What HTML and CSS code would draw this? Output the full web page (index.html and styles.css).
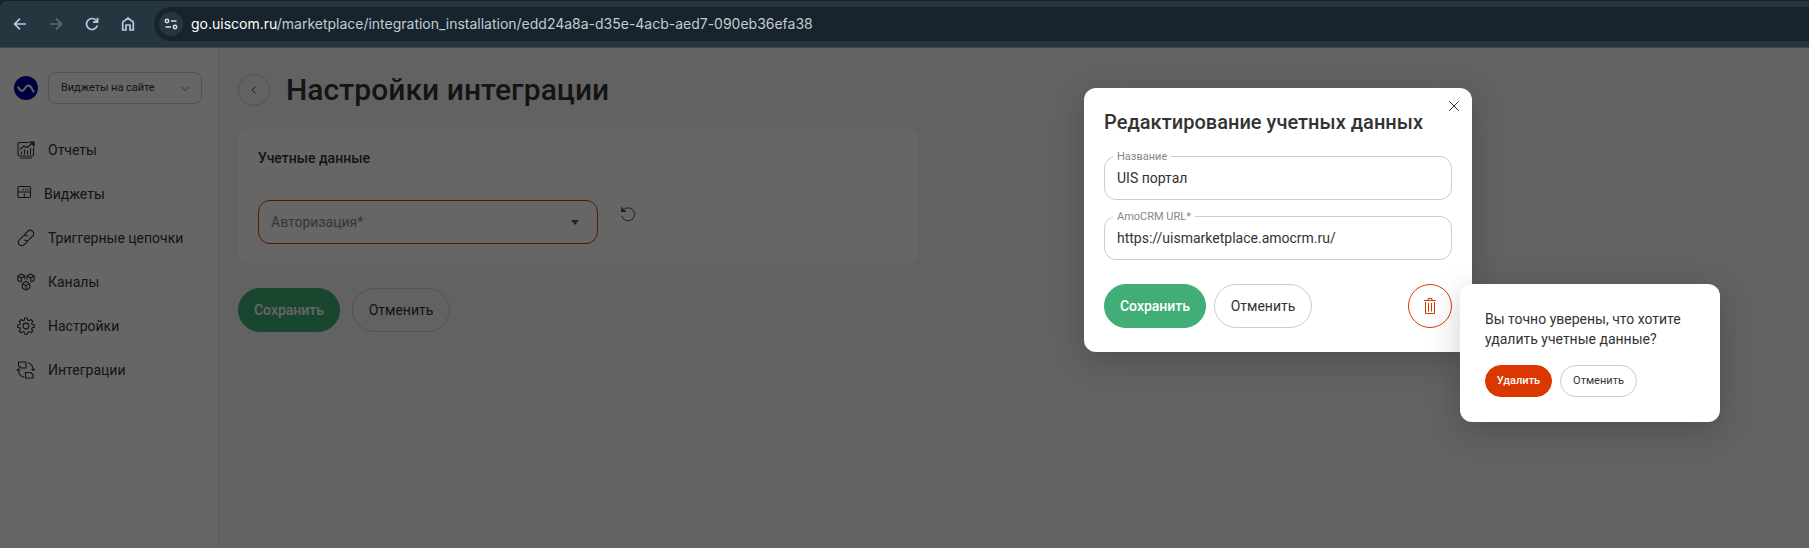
FILE: index.html
```
<!DOCTYPE html>
<html lang="ru">
<head>
<meta charset="utf-8">
<title>Настройки интеграции</title>
<link rel="stylesheet" href="styles.css">
</head>
<body>
<div class="chrome">
<div class="browser">
  <svg class="nav-icon" viewBox="0 0 16 16"><path d="M14 8H3M8 2.600 2.600 8 8 13.400"/></svg>
  <svg class="nav-icon dim" viewBox="0 0 16 16"><path d="M2 8h11M8 2.600 13.400 8 8 13.400"/></svg>
  <svg class="nav-icon" viewBox="0 0 16 16"><path d="M13.300 9.500A5.500 5.500 0 1 1 12 4.200L13.500 5.700M13.600 1.800V6.200H9"/></svg>
  <svg class="nav-icon" viewBox="0 0 16 16"><path d="M2.700 6.200 8 2l5.300 4.200V14H10V9H6v5H2.700z"/></svg>
  <div class="address">
    <span class="site-info"><svg viewBox="0 0 14 14"><circle cx="3" cy="4" r="1.700"/><path d="M7 4h5.500M1.500 10H7"/><circle cx="11" cy="10" r="1.700"/></svg></span>
    <span class="url"><b>go.uiscom.ru</b>/marketplace/integration_installation/edd24a8a-d35e-4acb-aed7-090eb36efa38</span>
  </div>
</div>
</div>
<div class="app">
  <aside class="sidebar">
    <div class="product">
      <svg class="logo" viewBox="0 0 24 24"><circle cx="12" cy="12" r="12" fill="#0000a0"/><path d="M3.200 11.500h1c1.200 0 1 3.500 3.800 3.500 3 0 3-5.500 6.300-5.500 3.700 0 3.200 5 6 6.500" fill="none" stroke="#fff" stroke-width="2"/></svg>
      <div class="select"><span>Виджеты на сайте</span><svg viewBox="0 0 10 6"><path d="m1.500 1 3.500 3.500L8.500 1"/></svg></div>
    </div>
    <nav class="menu">
      <a class="item"><svg viewBox="0 0 18 18"><path d="M11.500 1.500h-9a1.500 1.500 0 0 0-1.500 1.500v10.500A1.500 1.500 0 0 0 2.500 15h12.500a1.500 1.500 0 0 0 1.500-1.500V6.500M3 17h12M3 8.500l4-3.500 3 1.500 5.500-4.500M4.500 13.500v-3M7.500 13.500V8.500M10.500 13.500v-4M13.500 13.500V7"/><path d="M13 1h4v4z" fill="#333"/></svg>Отчеты</a>
      <a class="item widgets"><svg viewBox="0 0 18 18"><rect x=".9" y="1.500" width="12.600" height="11" rx="1.200"/><path d="M1 7h12.500M7.300 8.500v4"/><path d="M5.600 4.500h1.200M8 4.500h1.200M10.400 4.500h1.200" stroke-width="1.500"/></svg>Виджеты</a>
      <a class="item"><svg viewBox="0 0 18 18"><path d="M7.300 5.700 10.700 2.300a3.300 3.300 0 0 1 4.900 4.900l-3.500 3.500a3.300 3.300 0 0 1-4.900 0M10.700 12.300l-3.400 3.400a3.300 3.300 0 0 1-4.900-4.900l3.500-3.500a3.300 3.300 0 0 1 4.900 0"/></svg>Триггерные цепочки</a>
      <a class="item"><svg viewBox="0 0 18 18"><path d="M3.500 9 .8 7.200V3L4.300 1l3.600 2v3.500M.8 3l3.500 2 3.600-2M4.300 5v4M14.500 9l2.700-1.800V3l-3.500-2-3.600 2v3.500M10.100 3l3.600 2 3.500-2M13.700 5v4M5.300 10.500 9 8.500l3.700 2v4.500L9 17.200l-3.700-2.200zM5.300 10.500 9 12.700l3.700-2.200M9 12.700v4.300"/></svg>Каналы</a>
      <a class="item"><svg viewBox="0 0 18 18"><circle cx="9" cy="9" r="2.900"/><path d="M7.700 1h2.600l.5 2.100 1.300.6 1.900-1.200 1.800 1.800-1.200 1.900.6 1.400 2.100.4v2.300l-2.100.5-.6 1.300 1.200 1.900-1.800 1.800-1.900-1.200-1.300.6-.5 2.100H7.700l-.5-2.100-1.300-.6L4 15.800 2.200 14l1.200-1.900-.6-1.300-2.100-.5V8l2.100-.4.6-1.400-1.200-1.900L4 2.500l1.900 1.200 1.300-.6z"/></svg>Настройки</a>
      <a class="item"><svg viewBox="0 0 18 18"><path d="M1.500 1h7.500v6H4L1.500 5zM8.500 11.500h5l2.500 2v3.500H8.500zM11 1.800c3 .7 5 3.500 5 7.200M7 16.200C3.800 15.500 1.500 13 1.500 9.500"/><path d="M14.500 8.200h3.500L16.200 10zM-.5 9.300h3.800L1.500 7.500z" fill="#333" stroke-width=".5"/></svg>Интеграции</a>
    </nav>
  </aside>
  <main class="content">
    <header class="heading">
      <span class="back"><svg viewBox="0 0 8 10"><path d="M5.500 1.500 2 5l3.500 3.500"/></svg></span>
      <h1>Настройки интеграции</h1>
    </header>
    <section class="card">
      <h2>Учетные данные</h2>
      <div class="auth-row">
        <div class="auth-select"><span>Авторизация*</span><i class="caret"></i></div>
        <svg class="reset" viewBox="0 0 16 16"><path d="M3.200 4A6.500 6.500 0 1 1 1.800 10" stroke="#555"/><path d="M1 .5V6h5.500z" fill="#555"/></svg>
      </div>
    </section>
    <div class="actions"><span class="btn primary">Сохранить</span><span class="btn">Отменить</span></div>
  </main>
  <div class="backdrop"></div>
</div>
<div class="dialog">
  <svg class="close" viewBox="0 0 12 12"><path d="m1.300 1.300 9.400 9.400M10.700 1.300l-9.400 9.400"/></svg>
  <h3>Редактирование учетных данных</h3>
  <fieldset class="field"><legend>Название</legend><div>UIS портал</div></fieldset>
  <fieldset class="field"><legend>AmoCRM URL*</legend><div>https://uismarketplace.amocrm.ru/</div></fieldset>
  <div class="dialog-actions">
    <span class="btn primary">Сохранить</span><span class="btn">Отменить</span>
    <span class="delete"><svg viewBox="0 0 14 18"><path d="M1 3.500h12M5 3.500v-2h4v2M2.500 5v11.500h9V5M5.500 6v8.500M8.500 6v8.500"/></svg></span>
  </div>
</div>
<div class="confirm">
  <p>Вы точно уверены, что хотите<br>удалить учетные данные?</p>
  <div class="confirm-actions"><span class="btn small danger">Удалить</span><span class="btn small">Отменить</span></div>
</div>
</body>
</html>
```
FILE: styles.css
```
* { box-sizing: border-box; }
body { margin: 0; height: 548px; overflow: hidden; display: flex; flex-direction: column; font-family: Roboto, "Liberation Sans", sans-serif; font-size: 14px; color: #333; }
h1, h2, h3, p { margin: 0; }
svg { fill: none; stroke-linecap: butt; flex: none; }

.chrome { flex: none; height: 48px; padding-top: 1px; background: #14212a; }
.browser { height: 47px; display: flex; align-items: center; gap: 20px; padding-left: 12px; background: #263640; border-bottom: 1px solid #3f4651; border-top-left-radius: 6px; }
.nav-icon { width: 16px; height: 16px; stroke: #b5ccdb; stroke-width: 1.7; }
.nav-icon.dim { stroke: #5c6d78; }
.address { flex: 1; height: 34px; margin-left: -2px; padding-left: 5px; display: flex; align-items: center; gap: 8px; border-radius: 17px 0 0 17px; background: #17242d; }
.site-info { width: 24px; height: 24px; border-radius: 50%; background: #263640; display: flex; align-items: center; justify-content: center; }
.site-info svg { width: 14px; height: 14px; stroke: #d5dde2; stroke-width: 1.5; }
.url { font-family: Inter, sans-serif; font-size: 14px; color: #c3cbd0; white-space: nowrap; letter-spacing: -.008px; padding-bottom: 2px; }
.url b { font-weight: 400; color: #fff; }

.app { flex: 1; display: flex; position: relative; background: #f6f6f6; }
.backdrop { position: absolute; inset: 0; background: rgba(0, 0, 0, .6); }
.sidebar { width: 219px; background: #fff; border-right: 1px solid #e6e6e6; padding-top: 24px; }
.product { display: flex; align-items: center; gap: 10px; padding-left: 14px; }
.logo { width: 24px; height: 24px; }
.select { width: 154px; height: 32px; border: 1px solid #ccc; border-radius: 8px; display: flex; align-items: center; justify-content: space-between; padding: 0 11px 0 12px; font-size: 11px; }
.select span { padding-bottom: 1px; letter-spacing: -.05px; }
.select svg { width: 10px; height: 6px; stroke: #777; margin-top: 2px; }
.menu { display: flex; flex-direction: column; padding: 24px 0 0 17px; }
.item { height: 44px; display: flex; align-items: center; gap: 13px; }
.item svg { width: 18px; height: 18px; stroke: #333; stroke-width: 1.1; overflow: visible; }
.item.widgets { gap: 9px; }

.content { flex: 1; padding: 24px 0 0 19px; }
.heading { display: flex; align-items: center; gap: 16px; height: 36px; }
.back { width: 32px; height: 32px; border: 1px solid #ccc; border-radius: 50%; display: flex; align-items: center; justify-content: center; }
.back svg { width: 8px; height: 10px; stroke: #444; margin-right: 1px; }
h1 { font-size: 30px; font-weight: 500; line-height: 36px; letter-spacing: .05px; }
.card { width: 680px; height: 136px; margin-top: 20px; border-radius: 12px; background: #fff; padding: 20px; }
h2 { font-size: 14px; font-weight: 500; line-height: 20px; }
.auth-row { display: flex; gap: 22px; margin-top: 32px; }
.auth-select { width: 340px; height: 44px; border: 1px solid #db3700; border-radius: 12px; display: flex; align-items: center; justify-content: space-between; padding: 0 18px 0 12px; color: #888; }
.caret { border: 4px solid transparent; border-top: 5px solid #555; border-bottom: 0; }
.reset { width: 16px; height: 16px; margin-top: 6px; }
.actions { display: flex; gap: 12px; margin-top: 24px; }
.btn { height: 44px; padding: 0 16px; border: 1px solid #ccc; border-radius: 22px; display: flex; align-items: center; justify-content: center; font-size: 14px; width: 98px; white-space: nowrap; }
.btn.primary { width: 102px; background: #40ae76; border-color: #40ae76; color: #fff; font-weight: 500; }

.dialog { position: absolute; left: 1084px; top: 88px; width: 388px; height: 264px; border-radius: 12px; background: #fff; padding: 20px; box-shadow: 0 8px 32px rgba(0, 0, 0, .2); }
.close { position: absolute; right: 12px; top: 12px; width: 12px; height: 12px; stroke: #333; }
h3 { font-size: 20px; font-weight: 500; line-height: 28px; margin-bottom: 13px; letter-spacing: .03px; }
.field { margin: 0 0 9px; padding: 0 12px; height: 51px; border: 1px solid #ccc; border-radius: 12px; min-width: 0; }
.field legend { margin-left: -4px; padding: 1px 4px 0; font-size: 11px; line-height: 13px; height: 14px; color: #888; }
.field div { line-height: 30px; }
.dialog-actions { display: flex; gap: 8px; margin-top: 24px; }
.delete { width: 44px; height: 44px; margin-left: auto; border: 1px solid #db3700; border-radius: 50%; display: flex; align-items: center; justify-content: center; }
.delete svg { width: 14px; height: 18px; stroke: #db3700; }

.confirm { position: absolute; left: 1460px; top: 284px; width: 260px; height: 138px; border-radius: 12px; background: #fff; padding: 25px; box-shadow: 0 8px 32px rgba(0, 0, 0, .2); }
.confirm p { line-height: 20px; white-space: nowrap; }
.confirm-actions { display: flex; gap: 8px; margin-top: 16px; }
.btn.small { width: 77px; height: 32px; padding: 0 0 1px; font-size: 11px; }
.btn.danger { width: 67px; background: #db3700; border-color: #db3700; color: #fff; font-weight: 500; }
```
